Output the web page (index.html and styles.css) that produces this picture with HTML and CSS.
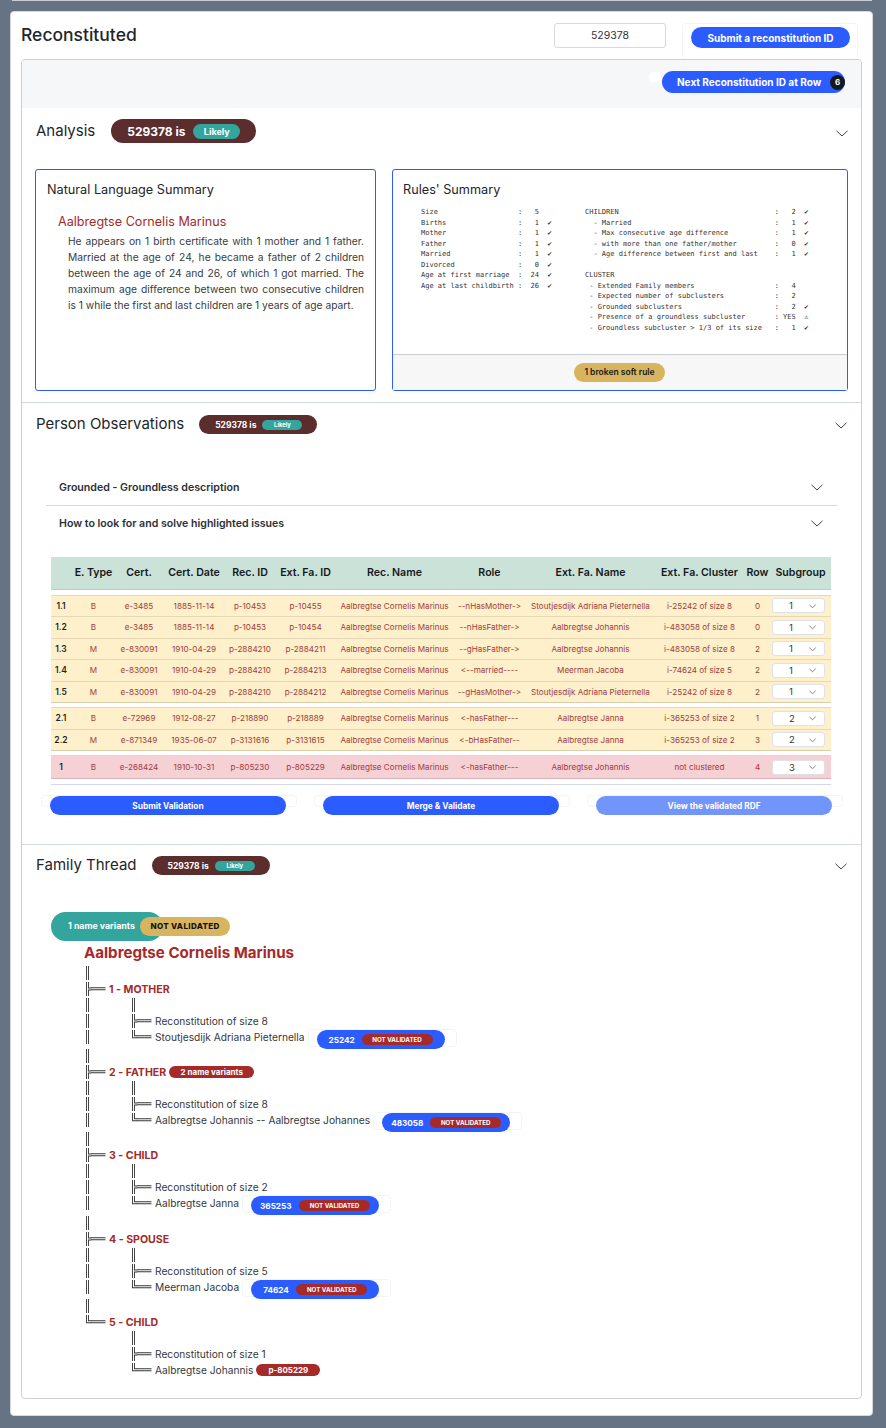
FILE: index.html
```html
<!DOCTYPE html>
<html lang="en">
<head>
<meta charset="utf-8">
<title>Reconstituted</title>
<link rel="stylesheet" href="styles.css">
</head>
<body>
<div class="top-edge"></div>
<main class="card">
  <header class="card-head">
    <h1>Reconstituted</h1>
    <div class="id-input">529378</div>
    <div class="ghost ghost-submit"><button class="btn btn-submit">Submit a reconstitution ID</button></div>
  </header>
  <div class="panel">
    <div class="band">
      <span class="blob"></span>
      <button class="btn btn-next"><span>Next Reconstitution ID at Row</span><span class="count">6</span></button>
    </div>

    <section class="sec sec-analysis">
      <div class="sec-head">
        <h2>Analysis</h2>
        <span class="status status-lg">529378 is <span class="likely">Likely</span></span>
        <svg class="chev chev-sec" viewBox="0 0 12 7"><polyline points="0.5,0.8 6,6 11.5,0.8"/></svg>
      </div>
      <div class="summaries">
        <article class="box box-nl">
          <h3>Natural Language Summary</h3>
          <h4>Aalbregtse Cornelis Marinus</h4>
          <p>He appears on 1 birth certificate with 1 mother and 1 father. Married at the age of 24, he became a father of 2 children between the age of 24 and 26, of which 1 got married. The maximum age difference between two consecutive children is 1 while the first and last children are 1 years of age apart.</p>
        </article>
        <article class="box box-rules">
          <h3>Rules' Summary</h3>
          <div class="rules">
<pre class="rules-left">Size                   :   5
Births                 :   1  ✔
Mother                 :   1  ✔
Father                 :   1  ✔
Married                :   1  ✔
Divorced               :   0  ✔
Age at first marriage  :  24  ✔
Age at last childbirth :  26  ✔</pre>
<pre class="rules-right">CHILDREN                                     :   2  ✔
  - Married                                  :   1  ✔
  - Max consecutive age difference           :   1  ✔
  - with more than one father/mother         :   0  ✔
  - Age difference between first and last    :   1  ✔

CLUSTER
 - Extended Family members                   :   4
 - Expected number of subclusters            :   2
 - Grounded subclusters                      :   2  ✔
 - Presence of a groundless subcluster       : YES  ⚠
 - Groundless subcluster &gt; 1/3 of its size   :   1  ✔</pre>
          </div>
          <footer class="box-foot"><span class="soft-rule">1 broken soft rule</span></footer>
        </article>
      </div>
    </section>

    <section class="sec sec-obs">
      <div class="sec-head">
        <h2>Person Observations</h2>
        <span class="status status-sm">529378 is <span class="likely">Likely</span></span>
        <svg class="chev chev-sec" viewBox="0 0 12 7"><polyline points="0.5,0.8 6,6 11.5,0.8"/></svg>
      </div>
      <div class="accordion">
        <div class="acc-item acc-first"><span>Grounded - Groundless description</span><svg class="chev" viewBox="0 0 12 7"><polyline points="0.5,0.8 6,6 11.5,0.8"/></svg></div>
        <div class="acc-item acc-second"><span>How to look for and solve highlighted issues</span><svg class="chev" viewBox="0 0 12 7"><polyline points="0.5,0.8 6,6 11.5,0.8"/></svg></div>
      </div>
      <table class="obs">
        <colgroup>
          <col class="c0"><col class="c1"><col class="c2"><col class="c3"><col class="c4"><col class="c5"><col class="c6"><col class="c7"><col class="c8"><col class="c9"><col class="c10"><col class="c11">
        </colgroup>
        <thead>
          <tr><th></th><th>E. Type</th><th>Cert.</th><th>Cert. Date</th><th>Rec. ID</th><th>Ext. Fa. ID</th><th>Rec. Name</th><th>Role</th><th>Ext. Fa. Name</th><th>Ext. Fa. Cluster</th><th>Row</th><th>Subgroup</th></tr>
        </thead>
        <tbody class="gap gap-first"><tr><td colspan="12"></td></tr></tbody>
        <tbody class="group warn">
          <tr><td class="n">1.1</td><td>B</td><td>e-3485</td><td>1885-11-14</td><td>p-10453</td><td>p-10455</td><td>Aalbregtse Cornelis Marinus</td><td>--nHasMother-&gt;</td><td>Stoutjesdijk Adriana Pieternella</td><td>i-25242 of size 8</td><td>0</td><td><span class="sel"><span>1</span><svg class="chev" viewBox="0 0 12 7"><polyline points="0.5,0.8 6,6 11.5,0.8"/></svg></span></td></tr>
          <tr><td class="n">1.2</td><td>B</td><td>e-3485</td><td>1885-11-14</td><td>p-10453</td><td>p-10454</td><td>Aalbregtse Cornelis Marinus</td><td>--nHasFather-&gt;</td><td>Aalbregtse Johannis</td><td>i-483058 of size 8</td><td>0</td><td><span class="sel"><span>1</span><svg class="chev" viewBox="0 0 12 7"><polyline points="0.5,0.8 6,6 11.5,0.8"/></svg></span></td></tr>
          <tr><td class="n">1.3</td><td>M</td><td>e-830091</td><td>1910-04-29</td><td>p-2884210</td><td>p-2884211</td><td>Aalbregtse Cornelis Marinus</td><td>--gHasFather-&gt;</td><td>Aalbregtse Johannis</td><td>i-483058 of size 8</td><td>2</td><td><span class="sel"><span>1</span><svg class="chev" viewBox="0 0 12 7"><polyline points="0.5,0.8 6,6 11.5,0.8"/></svg></span></td></tr>
          <tr><td class="n">1.4</td><td>M</td><td>e-830091</td><td>1910-04-29</td><td>p-2884210</td><td>p-2884213</td><td>Aalbregtse Cornelis Marinus</td><td>&lt;--married----</td><td>Meerman Jacoba</td><td>i-74624 of size 5</td><td>2</td><td><span class="sel"><span>1</span><svg class="chev" viewBox="0 0 12 7"><polyline points="0.5,0.8 6,6 11.5,0.8"/></svg></span></td></tr>
          <tr><td class="n">1.5</td><td>M</td><td>e-830091</td><td>1910-04-29</td><td>p-2884210</td><td>p-2884212</td><td>Aalbregtse Cornelis Marinus</td><td>--gHasMother-&gt;</td><td>Stoutjesdijk Adriana Pieternella</td><td>i-25242 of size 8</td><td>2</td><td><span class="sel"><span>1</span><svg class="chev" viewBox="0 0 12 7"><polyline points="0.5,0.8 6,6 11.5,0.8"/></svg></span></td></tr>
        </tbody>
        <tbody class="gap"><tr><td colspan="12"></td></tr></tbody>
        <tbody class="group warn">
          <tr><td class="n">2.1</td><td>B</td><td>e-72969</td><td>1912-08-27</td><td>p-218890</td><td>p-218889</td><td>Aalbregtse Cornelis Marinus</td><td>&lt;-hasFather---</td><td>Aalbregtse Janna</td><td>i-365253 of size 2</td><td>1</td><td><span class="sel"><span>2</span><svg class="chev" viewBox="0 0 12 7"><polyline points="0.5,0.8 6,6 11.5,0.8"/></svg></span></td></tr>
          <tr><td class="n">2.2</td><td>M</td><td>e-871349</td><td>1935-06-07</td><td>p-3131616</td><td>p-3131615</td><td>Aalbregtse Cornelis Marinus</td><td>&lt;-bHasFather--</td><td>Aalbregtse Janna</td><td>i-365253 of size 2</td><td>3</td><td><span class="sel"><span>2</span><svg class="chev" viewBox="0 0 12 7"><polyline points="0.5,0.8 6,6 11.5,0.8"/></svg></span></td></tr>
        </tbody>
        <tbody class="gap"><tr><td colspan="12"></td></tr></tbody>
        <tbody class="group bad">
          <tr><td class="n">1</td><td>B</td><td>e-268424</td><td>1910-10-31</td><td>p-805230</td><td>p-805229</td><td>Aalbregtse Cornelis Marinus</td><td>&lt;-hasFather---</td><td>Aalbregtse Johannis</td><td>not clustered</td><td>4</td><td><span class="sel"><span>3</span><svg class="chev" viewBox="0 0 12 7"><polyline points="0.5,0.8 6,6 11.5,0.8"/></svg></span></td></tr>
        </tbody>
        <tbody class="gap gap-last"><tr><td colspan="12"></td></tr></tbody>
      </table>
      <div class="actions">
        <div class="ghost ghost-action"><button class="btn btn-action">Submit Validation</button></div>
        <div class="ghost ghost-action"><button class="btn btn-action">Merge &amp; Validate</button></div>
        <div class="ghost ghost-action"><button class="btn btn-action btn-faded">View the validated RDF</button></div>
      </div>
    </section>

    <section class="sec sec-thread">
      <div class="sec-head">
        <h2>Family Thread</h2>
        <span class="status status-sm">529378 is <span class="likely">Likely</span></span>
        <svg class="chev chev-sec" viewBox="0 0 12 7"><polyline points="0.5,0.8 6,6 11.5,0.8"/></svg>
      </div>
      <div class="variants">
        <span class="variants-pill">1 name variants</span>
        <span class="nv-gold">NOT VALIDATED</span>
      </div>
      <div class="root-name">Aalbregtse Cornelis Marinus</div>
      <div class="tree">
        <div class="tl"><span class="g g1">║</span></div>
        <div class="tl"><span class="g g0">╠══</span><span class="rel">1 - MOTHER</span></div>
        <div class="tl"><span class="g g1">║</span><span class="g">║</span></div>
        <div class="tl"><span class="g g1">║</span><span class="g g2">╠══</span><span>Reconstitution of size 8</span></div>
        <div class="tl tl-badge"><span class="g g1">║</span><span class="g g2">╚══</span><span>Stoutjesdijk Adriana Pieternella</span><span class="ghost ghost-id"><span class="id-pill">25242<span class="nv-red">NOT VALIDATED</span></span></span></div>

        <div class="tl"><span class="g g1">║</span></div>
        <div class="tl"><span class="g g0">╠══</span><span class="rel">2 - FATHER</span><span class="names-red">2 name variants</span></div>
        <div class="tl"><span class="g g1">║</span><span class="g">║</span></div>
        <div class="tl"><span class="g g1">║</span><span class="g g2">╠══</span><span>Reconstitution of size 8</span></div>
        <div class="tl tl-badge"><span class="g g1">║</span><span class="g g2">╚══</span><span>Aalbregtse Johannis -- Aalbregtse Johannes</span><span class="ghost ghost-id"><span class="id-pill id-wide">483058<span class="nv-red">NOT VALIDATED</span></span></span></div>

        <div class="tl"><span class="g g1">║</span></div>
        <div class="tl"><span class="g g0">╠══</span><span class="rel">3 - CHILD</span></div>
        <div class="tl"><span class="g g1">║</span><span class="g">║</span></div>
        <div class="tl"><span class="g g1">║</span><span class="g g2">╠══</span><span>Reconstitution of size 2</span></div>
        <div class="tl tl-badge tl-tall"><span class="g g1">║</span><span class="g g2">╚══</span><span>Aalbregtse Janna</span><span class="ghost ghost-id"><span class="id-pill id-wide">365253<span class="nv-red">NOT VALIDATED</span></span></span></div>

        <div class="tl"><span class="g g1">║</span></div>
        <div class="tl"><span class="g g0">╠══</span><span class="rel">4 - SPOUSE</span></div>
        <div class="tl"><span class="g g1">║</span><span class="g">║</span></div>
        <div class="tl"><span class="g g1">║</span><span class="g g2">╠══</span><span>Reconstitution of size 5</span></div>
        <div class="tl tl-badge"><span class="g g1">║</span><span class="g g2">╚══</span><span>Meerman Jacoba</span><span class="ghost ghost-id"><span class="id-pill">74624<span class="nv-red">NOT VALIDATED</span></span></span></div>

        <div class="tl"><span class="g g1">║</span></div>
        <div class="tl"><span class="g g0">╚══</span><span class="rel">5 - CHILD</span></div>
        <div class="tl"><span class="g g1"></span><span class="g">║</span></div>
        <div class="tl"><span class="g g1"></span><span class="g g2">╠══</span><span>Reconstitution of size 1</span></div>
        <div class="tl"><span class="g g1"></span><span class="g g2">╚══</span><span>Aalbregtse Johannis</span><span class="p-red">p-805229</span></div>
      </div>
    </section>
  </div>
</main>
</body>
</html>
```

FILE: styles.css
```css
* { box-sizing: border-box; }
html, body { margin: 0; padding: 0; }
body {
  background: #667385;
  font-family: Inter, "Liberation Sans", sans-serif;
  font-variant-ligatures: none;
  font-feature-settings: "calt" 0;
  color: #1f2329;
  height: 1428px;
  overflow: hidden;
}
h1, h2, h3, h4, p, pre { margin: 0; font-weight: 400; }
button { border: 0; font-family: inherit; font-feature-settings: inherit; cursor: pointer; padding: 0; }

.top-edge { height: 1px; margin: 0 14px 0 12px; background: #c9ccd1; }

.card {
  margin: 10px 13px 0 10px;
  height: 1405px;
  background: #fff;
  border: 1px solid #d4d7dc;
  border-radius: 4px;
  padding: 0 10px;
}
.card-head { display: flex; align-items: flex-start; height: 47px; }
h1 { font-size: 17.5px; font-weight: 500; line-height: 22px; margin-top: 12px; flex: 1; color: #22262b; }
.id-input {
  width: 112px; height: 25px; margin-top: 11px;
  border: 1px solid #d5dae2; border-radius: 3px;
  font-size: 10.5px; line-height: 23px; text-align: center; color: #333;
}
.ghost { border: 1px solid #f3f4f6; border-radius: 4px; }
.ghost-submit { width: 176px; height: 35px; margin: 11px 4px 0 16px; padding: 3px 0 0 8px; border-bottom: 0; }
.btn { display: block; background: #2b5cff; color: #fff; font-weight: 700; border-radius: 12px; }
.btn-submit { width: 159px; height: 21px; font-size: 10px; }

.panel { height: 1340px; border: 1px solid #ccced2; border-radius: 4px; }
.band { position: relative; display: flex; justify-content: flex-end; height: 48px; background: #f6f7f9; padding: 11px 16px 0 0; border-radius: 4px 4px 0 0; }
.blob { position: absolute; right: 200px; top: 12px; width: 12px; height: 10px; background: #fff; border-radius: 4px; }
.btn-next { display: flex; align-items: center; width: 183px; height: 22px; padding: 0 0 0 15px; font-size: 10px; border-radius: 11px; justify-content: space-between; }
.count { width: 15px; height: 15px; border-radius: 50%; background: #15181d; font-size: 8px; line-height: 15px; text-align: center; }

.sec { border-bottom: 1px solid #d5dae2; }
.sec-analysis { height: 295px; padding: 11px 12px 0 13px; }
.sec-obs { height: 442px; padding: 12px 13px 0; }
.sec-thread { border-bottom: 0; padding: 11px 13px 0; }

.sec-head { display: flex; align-items: center; }
.sec-analysis .sec-head { height: 24px; margin-bottom: 26px; }
.sec-obs .sec-head, .sec-thread .sec-head { height: 19px; }
h2 { font-size: 15px; line-height: 20px; margin-left: 1px; margin-top: -1px; color: #22262b; }
.status { display: inline-flex; align-items: center; background: #5b2d2d; color: #fff; font-weight: 700; white-space: pre; }
.status-lg { width: 145px; height: 24px; margin-left: 16px; padding-left: 16px; border-radius: 12px; font-size: 12px; gap: 5px; }
.status-lg .likely { width: 47px; height: 15px; font-size: 9px; line-height: 15px; }
.status-sm { width: 118px; height: 19px; margin-left: 15px; padding-left: 16px; border-radius: 10px; font-size: 8.5px; gap: 4px; }
.status-sm .likely { width: 40px; height: 10px; font-size: 5.8px; line-height: 10px; }
.likely { background: #33a59c; border-radius: 8px; text-align: center; }

.chev { width: 12px; height: 7px; fill: none; stroke: #2b2f35; stroke-width: 0.9; flex: none; }
.chev-sec { margin-left: auto; margin-top: 2px; margin-right: 1px; }
.sec-analysis .chev-sec { margin-top: 5px; }

.summaries { display: grid; grid-template-columns: 341px 456px; gap: 16px; }
.box { height: 222px; border: 1px solid #2b5cff; border-radius: 3px; }
.box-nl { padding: 12px 11px; }
.box h3 { font-size: 12.7px; line-height: 16px; color: #22262b; }
.box-nl h4 { font-size: 12.6px; line-height: 16px; color: #a52a2a; margin: 16px 0 0 11px; }
.box-nl p { font-size: 10.25px; line-height: 16px; color: #383c42; margin: 3px 0 0 21px; text-align: justify; }
.box-rules { display: flex; flex-direction: column; }
.box-rules h3 { padding: 12px 10px 0; }
.rules { display: flex; flex: 1; padding: 9px 0 0 28px; }
.rules pre { font: 7px/10.5px "DejaVu Sans Mono", monospace; color: #333; }
.rules-left { width: 164px; }
.box-foot { display: flex; justify-content: center; align-items: center; height: 36px; padding-right: 1px; background: #f7f7f7; border-top: 1px solid #cccdd0; }
.soft-rule { background: #d9b45f; border-radius: 10px; height: 19px; width: 91px; text-align: center; font-size: 8.5px; font-weight: 600; line-height: 19px; color: #15181d; }

.accordion { margin: 0 11px; padding-top: 36px; }
.acc-item { display: flex; justify-content: space-between; align-items: center; height: 36px; padding: 0 14px 0 13px; font-size: 10.6px; font-weight: 600; color: #2c3036; }
.acc-first { border-bottom: 1px solid #d5dae2; }
.acc-second { padding-bottom: 2px; }

.obs { width: 780px; margin: 15px 0 0 16px; border-collapse: collapse; table-layout: fixed; font-size: 8.1px; color: #a23c3c; }
.c0 { width: 20px; } .c1 { width: 45px; } .c2 { width: 46px; } .c3 { width: 64px; } .c4 { width: 48px; } .c5 { width: 63px; }
.c6 { width: 115px; } .c7 { width: 75px; } .c8 { width: 127px; } .c9 { width: 91px; } .c10 { width: 25px; } .c11 { width: 61px; }
.obs th { height: 32px; background: #cbe2d9; border-bottom: 1px solid #b8cfc7; font-size: 10.6px; font-weight: 600; color: #15181d; padding: 0; white-space: nowrap; text-align: center; }
.obs td { padding: 0; text-align: center; white-space: nowrap; }
.gap td { height: 5px; border-bottom: 1px solid #d5dae2; }
.gap-first td { height: 6px; }
.gap-last td { height: 6px; }
.group td { height: 21.5px; border-bottom: 1px solid #e4d9b4; }
.warn { background: #fdf0cb; }
.warn tr:last-child td { border-bottom-color: #d8cfae; }
.bad { background: #f5d0d4; }
.bad td { height: 23px; border-bottom-color: #d8b2b7; }
.obs .n { font-weight: 600; font-size: 8.5px; color: #1c1f24; }
.sel { display: inline-flex; align-items: center; justify-content: space-between; width: 53px; height: 15px; padding: 0 8px 0 16px; background: #fff; border: 1px solid #dde1e8; border-radius: 3px; color: #333; font-size: 9.5px; vertical-align: middle; }
.sel .chev { width: 7px; height: 4.5px; stroke-width: 1; }
.obs td:last-child { text-align: left; padding-left: 2px; }

.actions { display: flex; justify-content: space-between; margin: 10px 5px 0 6px; }
.ghost-action { width: 256px; height: 12px; padding: 0 0 0 8px; }
.btn-action { width: 236px; height: 19px; font-size: 8.3px; border-radius: 10px; }
.btn-faded { background: #7295fb; }

.variants { position: relative; height: 29px; margin: 37px 0 0 16px; }
.variants-pill { display: block; width: 112px; height: 29px; padding-left: 17px; background: #33a59c; color: #fff; border-radius: 15px; font-size: 8.8px; font-weight: 700; line-height: 28px; }
.nv-gold { position: absolute; left: 89px; top: 5px; width: 90px; height: 19px; background: #d9b45f; color: #111; border-radius: 10px; text-align: center; font-size: 8px; font-weight: 800; line-height: 19px; letter-spacing: 0.35px; }
.root-name { margin: 2px 0 0 49px; font-size: 15.1px; line-height: 20px; font-weight: 700; color: #a52a2a; }

.tree { margin: 2px 0 0 49px; font-size: 10.2px; color: #33373d; }
.tl { display: flex; align-items: center; height: 16px; white-space: pre; }
.tl-badge { height: 19px; align-items: flex-start; }
.tl-tall { height: 20px; }
.tl-badge > span:not(.ghost) { line-height: 16px; }
.g { font: 11.8px/16px "DejaVu Sans Mono", monospace; color: #33373d; flex: none; filter: grayscale(1); }
.g0 { width: 25px; }
.g1 { width: 46px; }
.g2 { width: 25px; }
.rel { font-size: 10.6px; font-weight: 700; color: #a52a2a; }
.names-red { margin-left: 3px; width: 85px; height: 12px; background: #a52a2a; color: #fff; border-radius: 6px; font-size: 8px; font-weight: 700; line-height: 12px; text-align: center; }
.ghost-id { display: block; width: 149px; height: 18px; margin-left: 3px; padding-left: 8px; }
.id-pill { display: flex; align-items: center; justify-content: space-between; width: 128px; height: 19px; padding: 0 12px; background: #2b5cff; color: #fff; border-radius: 10px; font-size: 8.2px; font-weight: 700; }
.id-wide { padding: 0 9px; }
.nv-red { width: 71px; height: 11px; background: #a52a2a; border-radius: 6px; font-size: 6.2px; line-height: 11px; text-align: center; }
.p-red { margin-left: 3px; width: 64px; height: 12px; background: #a52a2a; color: #fff; border-radius: 6px; font-size: 8px; font-weight: 700; line-height: 12px; text-align: center; }
```
